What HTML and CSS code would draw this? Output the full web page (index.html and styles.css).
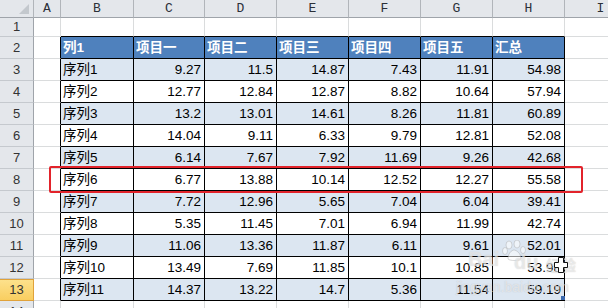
FILE: index.html
```html
<!DOCTYPE html>
<html>
<head>
<meta charset="utf-8">
<link rel="stylesheet" href="styles.css">
</head>
<body>
<div class="sheet">
  <div class="row hdr">
    <div class="cell rh corner"><span class="tri"></span></div>
    <div class="cell ca ch">A</div>
    <div class="cell cb ch">B</div>
    <div class="cell cc ch">C</div>
    <div class="cell cx ch">D</div>
    <div class="cell cx ch">E</div>
    <div class="cell cx ch">F</div>
    <div class="cell cx ch">G</div>
    <div class="cell cx ch">H</div>
    <div class="cell ci ch">I</div>
  </div>
  <div class="row r1">
    <div class="cell rh">1</div>
    <div class="cell ca"></div>
    <div class="cell cb tt"></div>
    <div class="cell cc tt"></div>
    <div class="cell cx tt"></div>
    <div class="cell cx tt"></div>
    <div class="cell cx tt"></div>
    <div class="cell cx tt"></div>
    <div class="cell cx tt"></div>
    <div class="cell ci"></div>
  </div>
  <div class="row">
    <div class="cell rh">2</div>
    <div class="cell ca tl"></div>
    <div class="cell cb t th">列1</div>
    <div class="cell cc t th">项目一</div>
    <div class="cell cx t th">项目二</div>
    <div class="cell cx t th">项目三</div>
    <div class="cell cx t th">项目四</div>
    <div class="cell cx t th">项目五</div>
    <div class="cell cx t th">汇总</div>
    <div class="cell ci"></div>
  </div>
  <div class="row band">
    <div class="cell rh">3</div>
    <div class="cell ca tl"></div>
    <div class="cell cb t">序列1</div>
    <div class="cell cc t num">9.27</div>
    <div class="cell cx t num">11.5</div>
    <div class="cell cx t num">14.87</div>
    <div class="cell cx t num">7.43</div>
    <div class="cell cx t num">11.91</div>
    <div class="cell cx t num">54.98</div>
    <div class="cell ci"></div>
  </div>
  <div class="row">
    <div class="cell rh">4</div>
    <div class="cell ca tl"></div>
    <div class="cell cb t">序列2</div>
    <div class="cell cc t num">12.77</div>
    <div class="cell cx t num">12.84</div>
    <div class="cell cx t num">12.87</div>
    <div class="cell cx t num">8.82</div>
    <div class="cell cx t num">10.64</div>
    <div class="cell cx t num">57.94</div>
    <div class="cell ci"></div>
  </div>
  <div class="row band">
    <div class="cell rh">5</div>
    <div class="cell ca tl"></div>
    <div class="cell cb t">序列3</div>
    <div class="cell cc t num">13.2</div>
    <div class="cell cx t num">13.01</div>
    <div class="cell cx t num">14.61</div>
    <div class="cell cx t num">8.26</div>
    <div class="cell cx t num">11.81</div>
    <div class="cell cx t num">60.89</div>
    <div class="cell ci"></div>
  </div>
  <div class="row">
    <div class="cell rh">6</div>
    <div class="cell ca tl"></div>
    <div class="cell cb t">序列4</div>
    <div class="cell cc t num">14.04</div>
    <div class="cell cx t num">9.11</div>
    <div class="cell cx t num">6.33</div>
    <div class="cell cx t num">9.79</div>
    <div class="cell cx t num">12.81</div>
    <div class="cell cx t num">52.08</div>
    <div class="cell ci"></div>
  </div>
  <div class="row band">
    <div class="cell rh">7</div>
    <div class="cell ca tl"></div>
    <div class="cell cb t">序列5</div>
    <div class="cell cc t num">6.14</div>
    <div class="cell cx t num">7.67</div>
    <div class="cell cx t num">7.92</div>
    <div class="cell cx t num">11.69</div>
    <div class="cell cx t num">9.26</div>
    <div class="cell cx t num">42.68</div>
    <div class="cell ci"></div>
  </div>
  <div class="row">
    <div class="cell rh">8</div>
    <div class="cell ca tl"></div>
    <div class="cell cb t">序列6</div>
    <div class="cell cc t num">6.77</div>
    <div class="cell cx t num">13.88</div>
    <div class="cell cx t num">10.14</div>
    <div class="cell cx t num">12.52</div>
    <div class="cell cx t num">12.27</div>
    <div class="cell cx t num">55.58</div>
    <div class="cell ci"></div>
  </div>
  <div class="row band">
    <div class="cell rh">9</div>
    <div class="cell ca tl"></div>
    <div class="cell cb t">序列7</div>
    <div class="cell cc t num">7.72</div>
    <div class="cell cx t num">12.96</div>
    <div class="cell cx t num">5.65</div>
    <div class="cell cx t num">7.04</div>
    <div class="cell cx t num">6.04</div>
    <div class="cell cx t num">39.41</div>
    <div class="cell ci"></div>
  </div>
  <div class="row">
    <div class="cell rh">10</div>
    <div class="cell ca tl"></div>
    <div class="cell cb t">序列8</div>
    <div class="cell cc t num">5.35</div>
    <div class="cell cx t num">11.45</div>
    <div class="cell cx t num">7.01</div>
    <div class="cell cx t num">6.94</div>
    <div class="cell cx t num">11.99</div>
    <div class="cell cx t num">42.74</div>
    <div class="cell ci"></div>
  </div>
  <div class="row band">
    <div class="cell rh">11</div>
    <div class="cell ca tl"></div>
    <div class="cell cb t">序列9</div>
    <div class="cell cc t num">11.06</div>
    <div class="cell cx t num">13.36</div>
    <div class="cell cx t num">11.87</div>
    <div class="cell cx t num">6.11</div>
    <div class="cell cx t num">9.61</div>
    <div class="cell cx t num">52.01</div>
    <div class="cell ci"></div>
  </div>
  <div class="row">
    <div class="cell rh">12</div>
    <div class="cell ca tl"></div>
    <div class="cell cb t">序列10</div>
    <div class="cell cc t num">13.49</div>
    <div class="cell cx t num">7.69</div>
    <div class="cell cx t num">11.85</div>
    <div class="cell cx t num">10.1</div>
    <div class="cell cx t num">10.85</div>
    <div class="cell cx t num">53.98</div>
    <div class="cell ci"></div>
  </div>
  <div class="row band">
    <div class="cell rh sel">13</div>
    <div class="cell ca tl"></div>
    <div class="cell cb t">序列11</div>
    <div class="cell cc t num">14.37</div>
    <div class="cell cx t num">13.22</div>
    <div class="cell cx t num">14.7</div>
    <div class="cell cx t num">5.36</div>
    <div class="cell cx t num">11.54</div>
    <div class="cell cx t num">59.19</div>
    <div class="cell ci"></div>
  </div>
  <div class="row">
    <div class="cell rh">14</div>
    <div class="cell ca"></div>
    <div class="cell cb"></div>
    <div class="cell cc"></div>
    <div class="cell cx"></div>
    <div class="cell cx"></div>
    <div class="cell cx"></div>
    <div class="cell cx"></div>
    <div class="cell cx"></div>
    <div class="cell ci"></div>
  </div>

  <div class="highlight"></div>
  <div class="fill-handle"></div>
  <div class="watermark">
    <span class="wm-bai">Bai</span>
    <svg class="wm-paw" width="26" height="22" viewBox="0 0 26 22">
      <g fill="rgba(255,255,255,0.55)" stroke="rgba(150,150,150,0.35)" stroke-width="1">
        <ellipse cx="7" cy="5" rx="3" ry="4"/>
        <ellipse cx="15" cy="4" rx="3" ry="4"/>
        <ellipse cx="3" cy="11" rx="2.5" ry="3.5"/>
        <ellipse cx="21" cy="10" rx="2.5" ry="3.5"/>
        <path d="M6 19 C6 13 10 10 12 10 C14 10 19 13 19 19 C17 21 8 21 6 19 Z"/>
      </g>
    </svg>
    <span class="wm-du">du</span>
    <span class="wm-jy">经验</span>
    <span class="wm-url">jingyan.baidu.com</span>
  </div>
  <svg class="cursor" width="14" height="16" viewBox="0 0 14 16">
    <path d="M4.5 0.5 H9.5 V5.5 H13.5 V10.5 H9.5 V15.5 H4.5 V10.5 H0.5 V5.5 H4.5 Z" fill="#fff" stroke="#111" stroke-width="1"/>
  </svg>
</div>
</body>
</html>
```

FILE: styles.css
```css
html, body {
  margin: 0;
  padding: 0;
  background: #ffffff;
  overflow: hidden;
}

.sheet {
  position: relative;
  width: 608px;
  height: 308px;
  overflow: hidden;
  font-family: "Liberation Sans", "Noto Sans CJK SC", sans-serif;
}

.row {
  display: flex;
  height: 22px;
}

.row.hdr {
  height: 18px;
}

.row.r1 {
  height: 19px;
}

.cell {
  box-sizing: border-box;
  flex: none;
  height: 100%;
  border-right: 1px solid #dadcdd;
  border-bottom: 1px solid #dadcdd;
  font-size: 13.5px;
  line-height: 21px;
  padding: 0 2px;
  white-space: nowrap;
  overflow: hidden;
  color: #000;
}

.rh {
  width: 34px;
  background: #e4e7eb;
  border-right: 1px solid #9fa4aa;
  border-bottom: 1px solid #c5c9ce;
  text-align: center;
  color: #333;
  font-size: 13px;
  padding: 0;
}

.r1 .rh {
  line-height: 18px;
}

.ca { width: 27px; }
.cb { width: 73px; }
.cc { width: 71px; }
.cx { width: 72px; }
.ci { flex: 1 0 72px; }

.hdr .cell {
  background: #e4e7eb;
  border-right: 1px solid #b1b5ba;
  border-bottom: 1px solid #9fa4aa;
  line-height: 17px;
}

.ch {
  font-family: "Liberation Mono", monospace;
  font-size: 13px;
  color: #2b3038;
  text-align: center;
  padding: 0;
}

.corner {
  position: relative;
}

.tri {
  position: absolute;
  right: 4px;
  bottom: 3px;
  width: 0;
  height: 0;
  border-left: 10px solid transparent;
  border-bottom: 10px solid #c3c8cd;
}

.tt {
  border-bottom-color: #000;
}

.tl {
  border-right-color: #000;
}

.t {
  border-right-color: #000;
  border-bottom-color: #000;
}

.band .t {
  background: #dce6f1;
}

.th {
  background: #4f81bd;
  color: #fff;
  font-weight: bold;
}

.num {
  text-align: right;
  padding-right: 3px;
}

.rh.sel {
  background: linear-gradient(#fde28e, #f9ce60);
  border-right: 1px solid #e0a23a;
  border-bottom: 1px solid #e0a23a;
  box-shadow: inset 0 1px 0 #e0a23a;
  color: #333;
}

.highlight {
  position: absolute;
  left: 49px;
  top: 166px;
  width: 534px;
  height: 27px;
  box-sizing: border-box;
  border: 2px solid #e2232b;
  border-radius: 2px;
}

.fill-handle {
  position: absolute;
  left: 561px;
  top: 296px;
  width: 4px;
  height: 4px;
  background: #3b68ad;
}

.watermark {
  position: absolute;
  left: 0;
  top: 0;
  width: 608px;
  height: 308px;
  pointer-events: none;
  color: rgba(255, 255, 255, 0.55);
  text-shadow: 0 0 1px rgba(140, 140, 140, 0.45);
  font-family: "Liberation Sans", "Noto Sans CJK SC", sans-serif;
  font-weight: bold;
}

.watermark span,
.watermark svg {
  position: absolute;
}

.wm-bai {
  left: 468px;
  top: 248px;
  font-size: 20px;
}

.wm-paw {
  left: 502px;
  top: 240px;
}

.wm-du {
  left: 514px;
  top: 251px;
  font-size: 20px;
}

.wm-jy {
  left: 546px;
  top: 254px;
  font-size: 15px;
}

.wm-url {
  left: 456px;
  top: 279px;
  font-size: 14px;
  font-weight: normal;
}

.cursor {
  position: absolute;
  left: 554px;
  top: 257px;
}
```
